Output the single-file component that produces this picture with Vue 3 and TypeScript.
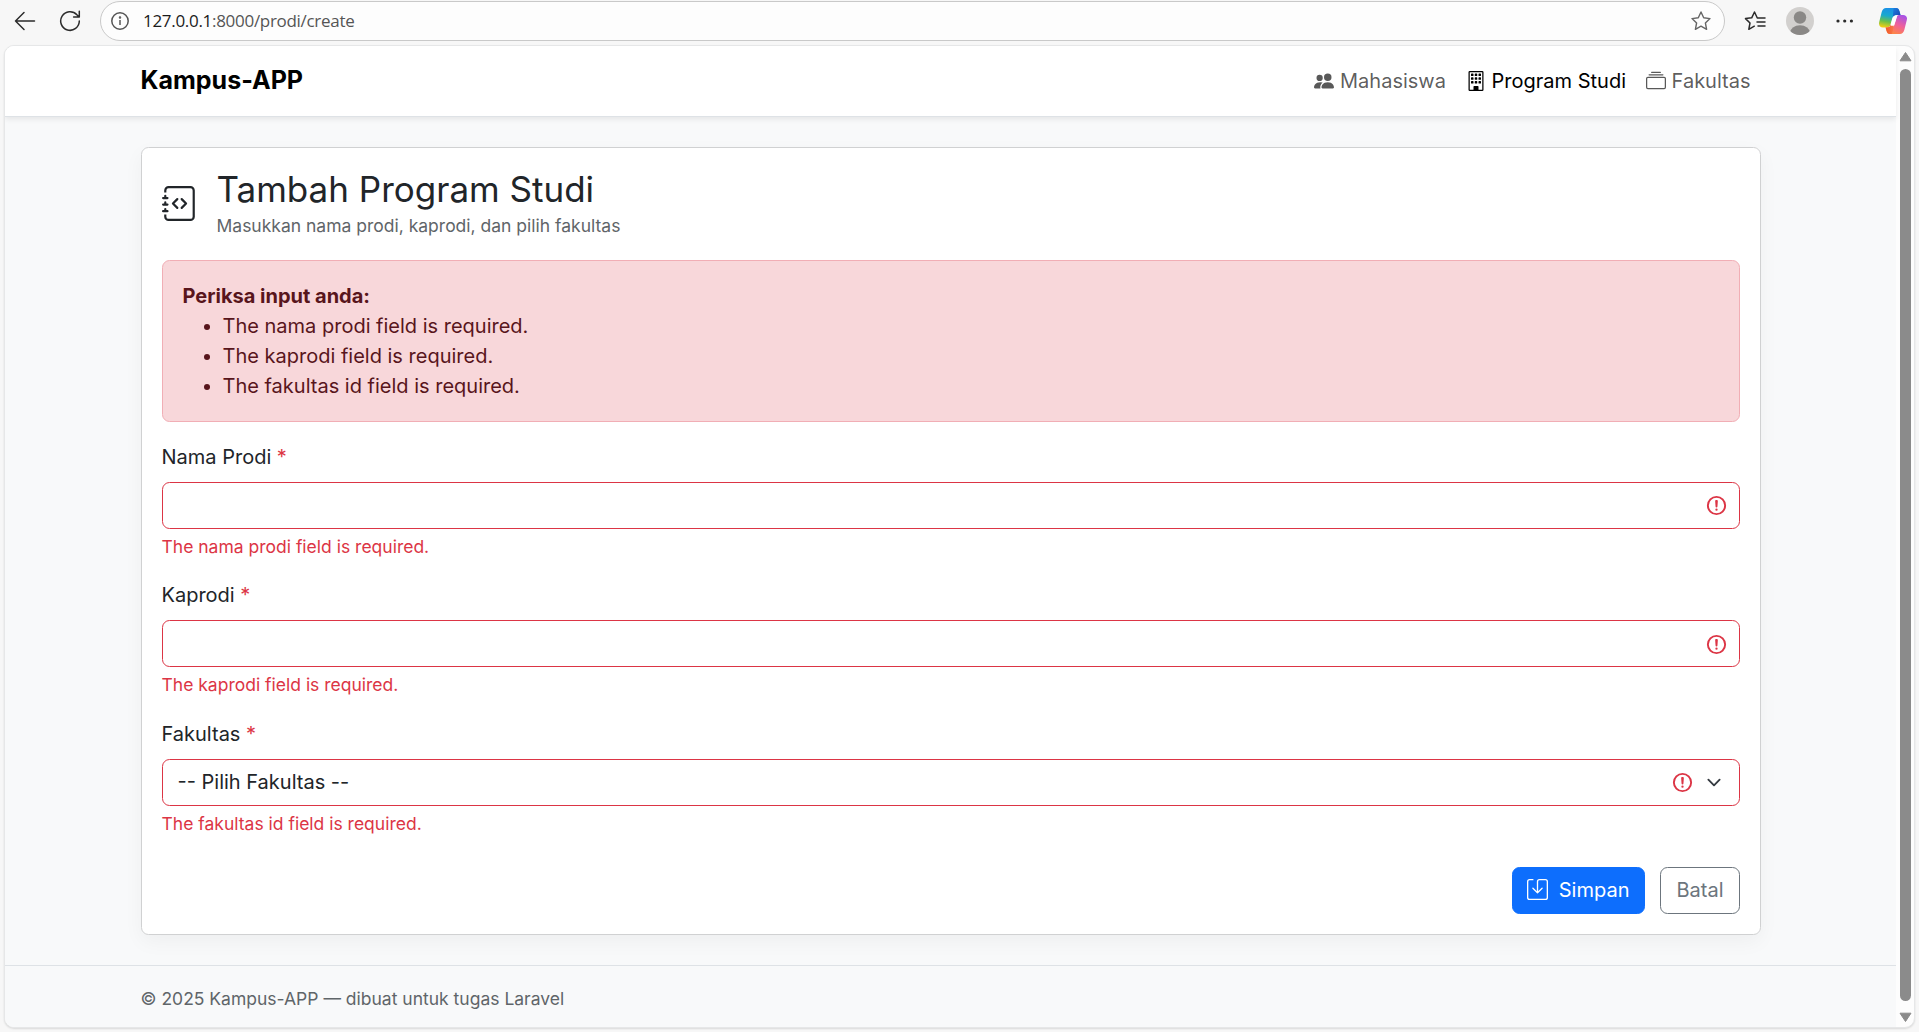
<script setup lang="ts">
import { ref } from 'vue'

interface NavItem {
  label: string
  active: boolean
  paths: string[]
}

const navItems: NavItem[] = [
  {
    label: 'Mahasiswa',
    active: false,
    paths: [
      'M7 14s-1 0-1-1 1-4 5-4 5 3 5 4-1 1-1 1zm4-6a3 3 0 1 0 0-6 3 3 0 0 0 0 6m-5.784 6A2.24 2.24 0 0 1 5 13c0-1.355.68-2.75 1.936-3.72A6.3 6.3 0 0 0 5 9c-4 0-5 3-5 4s1 1 1 1zM4.5 8a2.5 2.5 0 1 0 0-5 2.5 2.5 0 0 0 0 5',
    ],
  },
  {
    label: 'Program Studi',
    active: true,
    paths: [
      'M4 2.5a.5.5 0 0 1 .5-.5h1a.5.5 0 0 1 .5.5v1a.5.5 0 0 1-.5.5h-1a.5.5 0 0 1-.5-.5zm3 0a.5.5 0 0 1 .5-.5h1a.5.5 0 0 1 .5.5v1a.5.5 0 0 1-.5.5h-1a.5.5 0 0 1-.5-.5zm3.5-.5a.5.5 0 0 0-.5.5v1a.5.5 0 0 0 .5.5h1a.5.5 0 0 0 .5-.5v-1a.5.5 0 0 0-.5-.5zM4 5.5a.5.5 0 0 1 .5-.5h1a.5.5 0 0 1 .5.5v1a.5.5 0 0 1-.5.5h-1a.5.5 0 0 1-.5-.5zM7.5 5a.5.5 0 0 0-.5.5v1a.5.5 0 0 0 .5.5h1a.5.5 0 0 0 .5-.5v-1a.5.5 0 0 0-.5-.5zm2.5.5a.5.5 0 0 1 .5-.5h1a.5.5 0 0 1 .5.5v1a.5.5 0 0 1-.5.5h-1a.5.5 0 0 1-.5-.5zM4.5 8a.5.5 0 0 0-.5.5v1a.5.5 0 0 0 .5.5h1a.5.5 0 0 0 .5-.5v-1a.5.5 0 0 0-.5-.5zm2.5.5a.5.5 0 0 1 .5-.5h1a.5.5 0 0 1 .5.5v1a.5.5 0 0 1-.5.5h-1a.5.5 0 0 1-.5-.5zm3.5-.5a.5.5 0 0 0-.5.5v1a.5.5 0 0 0 .5.5h1a.5.5 0 0 0 .5-.5v-1a.5.5 0 0 0-.5-.5z',
      'M2 1a1 1 0 0 1 1-1h10a1 1 0 0 1 1 1v14a1 1 0 0 1-1 1H3a1 1 0 0 1-1-1zm11 0H3v14h3v-2.5a.5.5 0 0 1 .5-.5h3a.5.5 0 0 1 .5.5V15h3z',
      'M6.500 12.500h3V15.500h-3z',
    ],
  },
  {
    label: 'Fakultas',
    active: false,
    paths: [
      'M2.5 3.5a.5.5 0 0 1 0-1h11a.5.5 0 0 1 0 1zm2-2a.5.5 0 0 1 0-1h7a.5.5 0 0 1 0 1zM0 13a1.5 1.5 0 0 0 1.5 1.5h13A1.5 1.5 0 0 0 16 13V6a1.5 1.5 0 0 0-1.5-1.5h-13A1.5 1.5 0 0 0 0 6zm1.5.5A.5.5 0 0 1 1 13V6a.5.5 0 0 1 .5-.5h13a.5.5 0 0 1 .5.5v7a.5.5 0 0 1-.5.5z',
    ],
  },
]

const errors = {
  nama_prodi: 'The nama prodi field is required.',
  kaprodi: 'The kaprodi field is required.',
  fakultas_id: 'The fakultas id field is required.',
}

const namaProdi = ref('')
const kaprodi = ref('')
const fakultasId = ref('')
</script>

<template>
  <div class="browser">
    <div class="toolbar">
      <svg class="tb-back" width="22" height="20" viewBox="0 0 22 20"><path d="M20.5 10H1.5M10 1.5L1.5 10l8.500 8.500" /></svg>
      <svg class="tb-reload" width="22" height="22" viewBox="0 0 22 22"><path d="M20.300 11a9.300 9.300 0 1 1-2.400-6.200L20 7M20.300 1.300V7h-5.700" /></svg>
      <div class="address">
        <svg width="18" height="18" viewBox="0 0 18 18" class="info"><circle cx="9" cy="9" r="8.200" /><path d="M9 8v5" /><circle cx="9" cy="5.500" r=".5" /></svg>
        <span class="url"><b>127.0.0.1</b>:8000/prodi/create</span>
        <svg class="star" width="22" height="22" viewBox="0 0 22 22"><path d="M11 2l2.700 5.800 6.300.8-4.600 4.400 1.200 6.300L11 16.200l-5.600 3.100L6.600 13 2 8.600l6.300-.8z" /></svg>
      </div>
      <svg class="favs" width="22" height="22" viewBox="0 0 22 22"><path d="M14.500 8H13.300L10.500 2 7.700 7.800 1.500 8.600 6 13l-1.200 6.300 5.500-3.100M14.500 8h6.500M13 12h8M14 16h7" /></svg>
      <svg class="avatar" width="28" height="28" viewBox="0 0 28 28">
        <defs><clipPath id="avatar-clip"><circle cx="14" cy="14" r="14" /></clipPath></defs>
        <g clip-path="url(#avatar-clip)"><rect width="28" height="28" fill="#d2d0ce" /><circle cx="14" cy="10.500" r="6.200" fill="#8a8886" /><ellipse cx="14" cy="26" rx="10" ry="7.800" fill="#8a8886" /></g>
      </svg>
      <svg class="dots" width="18" height="4" viewBox="0 0 18 4"><circle cx="2" cy="2" r="1.600" /><circle cx="8.700" cy="2" r="1.600" /><circle cx="15.400" cy="2" r="1.600" /></svg>
      <svg class="copilot" width="28" height="26" viewBox="0 0 28 26">
        <defs>
          <linearGradient id="cp-a" x1=".5" y1="0" x2=".3" y2="1"><stop offset="0" stop-color="#1b8fe8" /><stop offset=".4" stop-color="#18a9cf" /><stop offset=".7" stop-color="#6cc04a" /><stop offset="1" stop-color="#f4cf13" /></linearGradient>
          <linearGradient id="cp-b" x1=".8" y1="0" x2=".3" y2="1"><stop offset="0" stop-color="#a452e8" /><stop offset=".5" stop-color="#f0609a" /><stop offset="1" stop-color="#ff8a3c" /></linearGradient>
          <linearGradient id="cp-c" x1="0" y1="0" x2="1" y2="1"><stop offset="0" stop-color="#1b7fe0" /><stop offset="1" stop-color="#1a45b0" /></linearGradient>
          <linearGradient id="cp-d" x1="0" y1="0" x2="1" y2="0"><stop offset="0" stop-color="#f05a28" /><stop offset="1" stop-color="#f9774a" /></linearGradient>
        </defs>
        <path d="M7 0h10c2 0 2.800 1 3.400 3l1.100 4h-4c-2.500 0-3.700 1.500-4.400 4l-1.600 5.500c-.7 2.300-1.700 3-3.700 3H4c-3 0-4.600-2.500-3.800-5.500L2.700 4C3.500 1.300 5 0 7 0z" fill="url(#cp-a)" />
        <path d="M14.500 0H17c2 0 2.800 1 3.400 3l1.100 4h-4c-1.600 0-2.800.6-3.600 2z" fill="url(#cp-c)" />
        <path d="M21 26H11c-2 0-2.800-1-3.400-3l-1-3.500H8c2 0 3-.8 3.700-3L14.500 19l3-9.500c.7-2 1.500-2.500 3.500-2.500h3c3 0 4.600 2 3.800 5l-2.500 10c-.8 2.700-2.300 4-4.300 4z" fill="url(#cp-b)" />
        <path d="M13 26h-2c-2 0-2.800-1-3.400-3l-1-3.500H8c2 0 3-.8 3.700-2.500h3.400z" fill="url(#cp-d)" />
        <path d="M17 8h1.200l-3.100 9.800h-3.400l1.500-6.500C13.700 9.200 15 8 17 8z" fill="#fff" />
      </svg>
    </div>

    <div class="window">
      <div class="page">
        <header class="navbar">
          <div class="container nav-inner">
            <a class="brand">Kampus-APP</a>
            <nav class="nav">
              <a v-for="item in navItems" :key="item.label" class="nav-link" :class="{ active: item.active }">
                <svg width="20" height="20" viewBox="0 0 16 16" fill="currentColor"><path v-for="(d, i) in item.paths" :key="i" :d="d" /></svg>
                <span>{{ item.label }}</span>
              </a>
            </nav>
          </div>
        </header>

        <main class="container main">
          <section class="card">
            <div class="card-head">
              <svg width="35" height="35" viewBox="0 0 16 16" fill="currentColor">
                <path fill-rule="evenodd" d="M8.646 5.646a.5.5 0 0 1 .708 0l2 2a.5.5 0 0 1 0 .708l-2 2a.5.5 0 0 1-.708-.708L10.293 8 8.646 6.354a.5.5 0 0 1 0-.708m-1.292 0a.5.5 0 0 0-.708 0l-2 2a.5.5 0 0 0 0 .708l2 2a.5.5 0 0 0 .708-.708L5.707 8l1.647-1.646a.5.5 0 0 0 0-.708" />
                <path d="M3 0h10a2 2 0 0 1 2 2v12a2 2 0 0 1-2 2H3a2 2 0 0 1-2-2v-1h1v1a1 1 0 0 0 1 1h10a1 1 0 0 0 1-1V2a1 1 0 0 0-1-1H3a1 1 0 0 0-1 1v1H1V2a2 2 0 0 1 2-2" />
                <path d="M1 5v-.5a.5.5 0 0 1 1 0V5h.5a.5.5 0 0 1 0 1h-2a.5.5 0 0 1 0-1zm0 3v-.5a.5.5 0 0 1 1 0V8h.5a.5.5 0 0 1 0 1h-2a.5.5 0 0 1 0-1zm0 3v-.5a.5.5 0 0 1 1 0v.5h.5a.5.5 0 0 1 0 1h-2a.5.5 0 0 1 0-1z" />
              </svg>
              <div>
                <h3>Tambah Program Studi</h3>
                <div class="subtitle"><small>Masukkan nama prodi, kaprodi, dan pilih fakultas</small></div>
              </div>
            </div>

            <div class="alert">
              <strong>Periksa input anda:</strong>
              <ul>
                <li v-for="message in errors" :key="message">{{ message }}</li>
              </ul>
            </div>

            <div class="field">
              <label>Nama Prodi <span class="req">*</span></label>
              <div class="control">
                <input v-model="namaProdi" type="text" />
                <svg class="warn" width="23" height="23" viewBox="0 0 12 12"><circle cx="6" cy="6" r="4.500" /><path stroke-linejoin="round" d="M5.800 3.600h.4L6 6.500z" /><circle cx="6" cy="8.200" r=".6" class="pt" /></svg>
              </div>
              <div class="feedback">{{ errors.nama_prodi }}</div>
            </div>

            <div class="field">
              <label>Kaprodi <span class="req">*</span></label>
              <div class="control">
                <input v-model="kaprodi" type="text" />
                <svg class="warn" width="23" height="23" viewBox="0 0 12 12"><circle cx="6" cy="6" r="4.500" /><path stroke-linejoin="round" d="M5.800 3.600h.4L6 6.500z" /><circle cx="6" cy="8.200" r=".6" class="pt" /></svg>
              </div>
              <div class="feedback">{{ errors.kaprodi }}</div>
            </div>

            <div class="field">
              <label>Fakultas <span class="req">*</span></label>
              <div class="control">
                <select v-model="fakultasId">
                  <option value="">-- Pilih Fakultas --</option>
                </select>
                <svg class="warn" width="23" height="23" viewBox="0 0 12 12"><circle cx="6" cy="6" r="4.500" /><path stroke-linejoin="round" d="M5.800 3.600h.4L6 6.500z" /><circle cx="6" cy="8.200" r=".6" class="pt" /></svg>
                <svg class="chevron" width="20" height="15" viewBox="0 0 16 16"><path d="m2 5 6 6 6-6" /></svg>
              </div>
              <div class="feedback">{{ errors.fakultas_id }}</div>
            </div>

            <div class="actions">
              <button class="btn primary" type="button">
                <svg width="21" height="21" viewBox="0 0 16 16" fill="currentColor"><path d="M2 1a1 1 0 0 0-1 1v12a1 1 0 0 0 1 1h12a1 1 0 0 0 1-1V2a1 1 0 0 0-1-1H9.500a1 1 0 0 0-1 1v7.293l2.646-2.647a.5.5 0 0 1 .708.708l-3.500 3.500a.5.5 0 0 1-.708 0l-3.500-3.500a.5.5 0 1 1 .708-.708L7.500 9.293V2a2 2 0 0 1 2-2H14a2 2 0 0 1 2 2v12a2 2 0 0 1-2 2H2a2 2 0 0 1-2-2V2a2 2 0 0 1 2-2h2.500a.5.5 0 0 1 0 1z" /></svg>
                <span>Simpan</span>
              </button>
              <button class="btn outline" type="button">Batal</button>
            </div>
          </section>
        </main>

        <footer class="footer">
          <div class="container"><small>© 2025 Kampus-APP — dibuat untuk tugas Laravel</small></div>
        </footer>
      </div>

      <div class="scrollbar">
        <svg width="13" height="11" viewBox="0 0 13 11"><path d="M6.500 1.500L12 9.800H1z" /></svg>
        <div class="thumb"></div>
        <svg width="13" height="11" viewBox="0 0 13 11"><path d="M6.500 9.500L12 1.200H1z" /></svg>
      </div>
    </div>
  </div>
</template>

<style>
body {
  margin: 0;
  overflow: hidden;
}
</style>

<style scoped>
* {
  box-sizing: border-box;
}

.browser {
  display: flex;
  flex-direction: column;
  height: 1032px;
  background: #f7f7f7;
  font-family: Inter, 'Liberation Sans', sans-serif;
  font-size: 20px;
  line-height: 30px;
  color: #212529;
}

.browser svg {
  display: block;
  flex: none;
}

/* Browser toolbar */
.toolbar {
  display: flex;
  flex: none;
  align-items: center;
  height: 45px;
  padding: 0 6px 4px 14px;
}

.tb-back,
.tb-reload,
.favs {
  fill: none;
  stroke: #2b2b2b;
  stroke-width: 1.5;
  stroke-linecap: round;
  stroke-linejoin: round;
}

.tb-reload {
  margin-left: 23px;
}

.address {
  display: flex;
  align-items: center;
  width: 1625px;
  height: 40px;
  margin-left: 19px;
  padding: 0 12px 0 10px;
  border: 1px solid #c9c9c9;
  border-radius: 20px;
  background: #fdfdfd;
}

.info {
  fill: none;
  stroke: #555;
  stroke-width: 1.5;
}

.url {
  margin-left: 14px;
  font-family: 'Open Sans', 'Noto Sans', sans-serif;
  font-size: 17px;
  letter-spacing: -0.3px;
  color: #555;
}

.url b {
  font-weight: 400;
  color: #1b1b1b;
}

.star {
  margin-left: auto;
  fill: none;
  stroke: #666;
  stroke-width: 1.4;
  stroke-linejoin: round;
}

.favs {
  margin-left: 19px;
}

.avatar {
  margin-left: 20px;
}

.dots {
  margin-left: 22px;
  fill: #2b2b2b;
}

.copilot {
  margin-left: 25px;
}

/* Content window */
.window {
  display: flex;
  flex: none;
  width: 1911px;
  height: 983px;
  margin-left: 4px;
  border: 1px solid #e6e7e8;
  border-radius: 10px;
  overflow: hidden;
  background: #fdfdfd;
  box-shadow: 0 1px 2px rgba(0, 0, 0, 0.12);
}

.page {
  width: 1891px;
  background: #f8f9fa;
}

.container {
  width: 1650px;
  margin: 0 auto;
  padding: 0 15px;
}

.navbar {
  position: relative;
  height: 71px;
  border-bottom: 1px solid #dee2e6;
  background: #fff;
  box-shadow: 0 2.5px 5px rgba(0, 0, 0, 0.075);
}

.nav-inner {
  display: flex;
  align-items: center;
  justify-content: space-between;
  height: 70px;
}

.brand {
  padding-bottom: 2px;
  font-size: 25px;
  font-weight: 700;
  color: #000;
}

.nav {
  display: flex;
}

.nav-link {
  display: flex;
  align-items: center;
  gap: 5.6px;
  padding: 0 10px;
  color: rgba(0, 0, 0, 0.65);
}

.nav-link.active {
  color: #000;
}

.main {
  padding-top: 30px;
  padding-bottom: 30px;
}

.card {
  height: 788px;
  padding: 20px;
  border: 1px solid #d0d1d2;
  border-radius: 7.5px;
  background: #fff;
  box-shadow: 0 7px 20px rgba(0, 0, 0, 0.045);
}

.card-head {
  display: flex;
  align-items: center;
  gap: 20px;
  margin-bottom: 19px;
}

.card-head svg {
  margin-top: -2px;
}

h3 {
  margin: 0;
  font-size: 35px;
  font-weight: 400;
  line-height: 42px;
}

.subtitle {
  color: #5f6569;
}

small {
  font-size: 17.5px;
}

.alert {
  margin-bottom: 20px;
  padding: 20px;
  border: 1px solid #f1aeb5;
  border-radius: 7.5px;
  background: #f8d7da;
  color: #58151c;
}

.alert strong {
  display: block;
  font-weight: 700;
}

ul {
  margin: 0;
  padding-left: 40px;
}

.field {
  margin-bottom: 20px;
}

label {
  display: block;
  margin-bottom: 10px;
}

.req,
.feedback {
  color: #dc3545;
}

.control {
  position: relative;
  height: 47px;
}

input,
select {
  appearance: none;
  display: block;
  width: 100%;
  height: 47px;
  padding: 7.5px 15px;
  border: 1px solid #dc3545;
  border-radius: 7.5px;
  outline: none;
  background: #fff;
  color: #212529;
  font: inherit;
}

.warn {
  position: absolute;
  top: 12.25px;
  right: 12px;
  fill: none;
  stroke: #dc3545;
}

.warn .pt {
  fill: #dc3545;
  stroke: none;
}

select ~ .warn {
  right: 46px;
}

.chevron {
  position: absolute;
  top: 16px;
  right: 16px;
  fill: none;
  stroke: #343a40;
  stroke-width: 2;
  stroke-linecap: round;
  stroke-linejoin: round;
}

.feedback {
  margin-top: 5px;
  font-size: 17.5px;
  line-height: 26.25px;
}

.actions {
  display: flex;
  justify-content: flex-end;
  gap: 15px;
  margin-top: 30px;
}

.btn {
  display: flex;
  align-items: center;
  height: 47px;
  padding: 0 15px;
  border: 1px solid #6c757d;
  border-radius: 7.5px;
  background: #fff;
  color: #6c757d;
  font: inherit;
}

.btn.primary {
  gap: 10.5px;
  padding-left: 14px;
  border-color: #0d6efd;
  background: #0d6efd;
  color: #fff;
}

.btn.primary svg {
  margin-top: -2px;
}

.footer {
  height: 62px;
  padding-top: 17px;
  border-top: 1px solid #dee2e6;
  color: #5f6569;
}

.scrollbar {
  display: flex;
  flex-direction: column;
  align-items: center;
  width: 18px;
  padding: 5px 0 4px;
}

.scrollbar svg {
  fill: #8b8b8b;
  stroke: #8b8b8b;
  stroke-linejoin: round;
}

.thumb {
  flex: none;
  width: 11px;
  height: 932px;
  margin: 7px 0 11px;
  border-radius: 6px;
  background: #8b8b8b;
}
</style>
